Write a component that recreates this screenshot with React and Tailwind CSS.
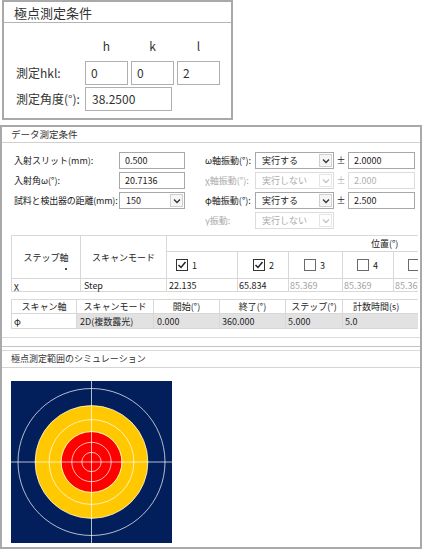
import React from "react";

const font = "font-['Noto_Sans_CJK_JP','Noto_Sans',sans-serif]";

function Chevron({ disabled }) {
  return (
    <svg width="8" height="6" viewBox="0 0 8 6">
      <path d="M1 1.5 L4 4.5 L7 1.5" fill="none" stroke={disabled ? "#c4c4c4" : "#333"} strokeWidth="1.3" />
    </svg>
  );
}

function Select({ value, disabled }) {
  return (
    <div className={`flex h-full border bg-white ${disabled ? "border-[#dcdcdc] text-[#ababab]" : "border-[#a8a8a8] text-[#1a1a1a]"}`}>
      <div className="flex-1 pl-[6px] flex items-center whitespace-nowrap">{value}</div>
      <div className={`w-[13px] my-[1px] mr-[1px] border flex items-center justify-center ${disabled ? "border-[#e6e6e6]" : "border-[#cfcfcf] bg-[#f6f6f6]"}`}>
        <Chevron disabled={disabled} />
      </div>
    </div>
  );
}

function Input({ value, disabled }) {
  return (
    <div className={`h-full border bg-white flex items-center pl-[5px] ${disabled ? "border-[#dcdcdc] text-[#b0b0b0]" : "border-[#a8a8a8] text-[#1a1a1a]"}`}>
      {value}
    </div>
  );
}

function Check({ checked }) {
  return (
    <svg width="12" height="12" viewBox="0 0 12 12">
      <rect x="0.5" y="0.5" width="11" height="11" fill="#fff" stroke={checked ? "#333" : "#6a6a6a"} />
      {checked && <path d="M2.5 6 L5 8.5 L9.5 3" fill="none" stroke="#222" strokeWidth="1.5" />}
    </svg>
  );
}

function Chart() {
  const cx = 80.5;
  const cy = 81;
  const R = 73.5;
  const radii = [7.5, 15, 22.5, 30, 37.5, 45].map((a) => R * Math.tan((a * Math.PI) / 180));
  return (
    <svg width="161" height="162" viewBox="0 0 161 162">
      <rect x="0" y="0" width="161" height="162" fill="#021f5c" />
      <circle cx={cx} cy={cy} r={radii[4]} fill="#ffc800" />
      <circle cx={cx} cy={cy} r={radii[2] - 0.5} fill="#ff0000" />
      {radii.map((r, i) => (
        <circle key={i} cx={cx} cy={cy} r={r} fill="none" stroke="#ffffff" strokeOpacity="0.7" strokeWidth="1" />
      ))}
      <line x1="0" y1={cy} x2="161" y2={cy} stroke="#ffffff" strokeOpacity="0.7" strokeWidth="1" />
      <line x1={cx} y1="0" x2={cx} y2="162" stroke="#ffffff" strokeOpacity="0.7" strokeWidth="1" />
    </svg>
  );
}

export default function App() {
  return (
    <div className={`w-[422px] h-[551px] bg-white overflow-hidden text-[#222] ${font}`}>
      {/* 極点測定条件 */}
      <div className="ml-[2px] w-[231px] h-[120px] border-2 border-[#a9a9a9]">
        <div className="h-[21px] border-b border-[#b4b4b4] pl-[10px] text-[13px] leading-[21px] text-[#333]">極点測定条件</div>
        <div className="pl-[12px] pt-[15px] text-[12px] text-[#333]">
          <div className="flex h-[16px] items-center">
            <div className="w-[69px]" />
            <div className="w-[43px] text-center">h</div>
            <div className="w-[43px] ml-[3px] text-center">k</div>
            <div className="w-[43px] ml-[3px] text-center">l</div>
          </div>
          <div className="flex h-[24px] mt-[7px] items-center">
            <div className="w-[69px] whitespace-nowrap">測定hkl:</div>
            <div className="w-[43px] h-full border border-[#b0b0b0] flex items-center pl-[5px]">0</div>
            <div className="w-[43px] h-full ml-[3px] border border-[#b0b0b0] flex items-center pl-[5px]">0</div>
            <div className="w-[43px] h-full ml-[3px] border border-[#b0b0b0] flex items-center pl-[5px]">2</div>
          </div>
          <div className="flex h-[24px] mt-[2px] items-center">
            <div className="w-[69px] whitespace-nowrap">測定角度(°):</div>
            <div className="w-[87px] h-full border border-[#b0b0b0] flex items-center pl-[6px]">38.2500</div>
          </div>
        </div>
      </div>

      {/* データ測定条件 */}
      <div className="mt-[5px] w-[422px] h-[424px] border-2 border-[#a9a9a9] overflow-hidden">
        <div className="h-[16px] border-b border-[#d0d0d0] pl-[9px] text-[9.5px] leading-[15px] text-[#333]">データ測定条件</div>

        <div className="flex pt-[9px] text-[9px] leading-none">
          <div className="pl-[12px] grid grid-cols-[105px_66px] auto-rows-[17px] gap-y-[3px] content-start">
            <div className="flex items-center whitespace-nowrap">入射スリット(mm):</div>
            <Input value="0.500" />
            <div className="flex items-center whitespace-nowrap">入射角ω(°):</div>
            <Input value="20.7136" />
            <div className="flex items-center whitespace-nowrap tracking-[-0.2px]">試料と検出器の距離(mm):</div>
            <Select value="150" />
          </div>
          <div className="ml-[20px] grid grid-cols-[50px_79px_14px_67px] auto-rows-[17px] gap-y-[3px]">
            <div className="flex items-center whitespace-nowrap">ω軸振動(°):</div>
            <Select value="実行する" />
            <div className="flex items-center justify-center">±</div>
            <Input value="2.0000" />

            <div className="flex items-center whitespace-nowrap text-[#ababab]">χ軸振動(°):</div>
            <Select value="実行しない" disabled />
            <div className="flex items-center justify-center text-[#b0b0b0]">±</div>
            <Input value="2.000" disabled />

            <div className="flex items-center whitespace-nowrap">φ軸振動(°):</div>
            <Select value="実行する" />
            <div className="flex items-center justify-center">±</div>
            <Input value="2.500" />

            <div className="flex items-center whitespace-nowrap text-[#ababab]">γ振動:</div>
            <Select value="実行しない" disabled />
            <div />
            <div />
          </div>
        </div>

        <div className="mt-[6px] ml-[9px] mr-[2px] overflow-hidden text-[9px] leading-none">
          {/* table 1 */}
          <div className="w-max bg-[#d8d8d8] p-px gap-px grid grid-cols-[68px_85px_70px_50px_53px_50px_50px] grid-rows-[15px_26px_12px]">
            <div className="row-span-2 bg-white flex items-center justify-center relative">
              ステップ軸
              <div className="absolute left-[53px] top-[32px] w-[2px] h-[2px] bg-[#111] rounded-full" />
            </div>
            <div className="row-span-2 bg-white flex items-center justify-center">スキャンモード</div>
            <div className="col-span-5 bg-white flex items-center pl-[204px] whitespace-nowrap">位置(°)</div>
            <div className="bg-white flex items-center pl-[9px] gap-[4px]"><Check checked />1</div>
            <div className="bg-white flex items-center pl-[15px] gap-[4px]"><Check checked />2</div>
            <div className="bg-white flex items-center pl-[15px] gap-[4px]"><Check />3</div>
            <div className="bg-white flex items-center pl-[14px] gap-[4px]"><Check />4</div>
            <div className="bg-white flex items-center pl-[14px] gap-[4px]"><Check />5</div>
            <div className="bg-white flex items-center pl-[2px]">χ</div>
            <div className="bg-white flex items-center pl-[3px]">Step</div>
            <div className="bg-white flex items-center pl-[2px]">22.135</div>
            <div className="bg-white flex items-center pl-[1px]">65.834</div>
            <div className="bg-white flex items-center pl-[1px] text-[#a4a4a4]">85.369</div>
            <div className="bg-white flex items-center pl-[1px] text-[#a4a4a4]">85.369</div>
            <div className="bg-white flex items-center pl-[1px] text-[#a4a4a4]">85.369</div>
          </div>

          {/* table 2 */}
          <div className="mt-[7px] w-max bg-[#d8d8d8] p-px gap-px grid grid-cols-[64px_76px_65px_65px_56px_80px] grid-rows-[13px_14px]">
            <div className="bg-white flex items-center justify-center">スキャン軸</div>
            <div className="bg-white flex items-center justify-center">スキャンモード</div>
            <div className="bg-white flex items-center justify-center">開始(°)</div>
            <div className="bg-white flex items-center justify-center">終了(°)</div>
            <div className="bg-white flex items-center justify-center">ステップ(°)</div>
            <div className="bg-white flex items-center pl-[10px] whitespace-nowrap">計数時間(s)</div>
            <div className="bg-white flex items-center pl-[2px]">φ</div>
            <div className="bg-[#e2e2e2] flex items-center pl-[3px] whitespace-nowrap">2D(複数露光)</div>
            <div className="bg-[#e2e2e2] flex items-center pl-[3px]">0.000</div>
            <div className="bg-[#e2e2e2] flex items-center pl-[2px]">360.000</div>
            <div className="bg-[#e2e2e2] flex items-center pl-[2px]">5.000</div>
            <div className="bg-[#e2e2e2] flex items-center pl-[2px]">5.0</div>
          </div>
        </div>

        <div className="h-[9px] border-b border-[#dcdcdc]" />
        <div className="h-[9px] border-b border-[#c4c4c4]" />
        <div className="h-[4px] border-b border-[#dadada]" />
        <div className="h-[17px] border-b border-[#d4d4d4] pl-[9px] text-[9px] leading-[16px] text-[#333] whitespace-nowrap">極点測定範囲のシミュレーション</div>

        <div className="mt-[13px] ml-[9px] w-[161px] h-[162px]">
          <Chart />
        </div>
      </div>
    </div>
  );
}
